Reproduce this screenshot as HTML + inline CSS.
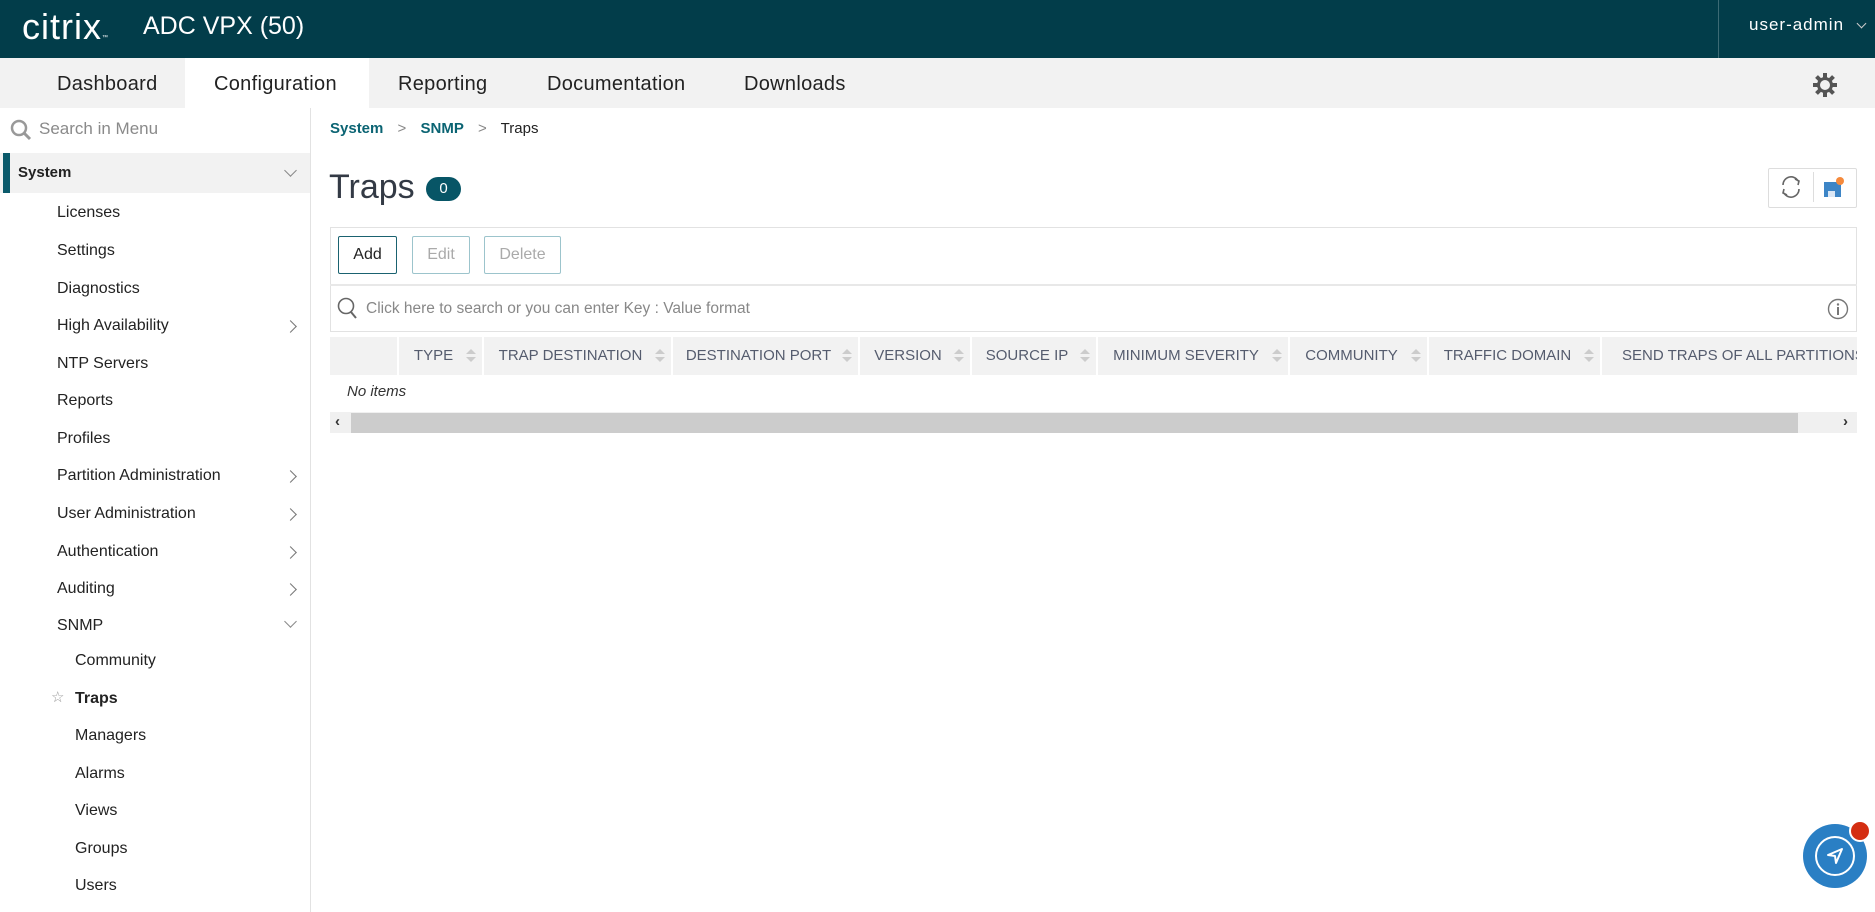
<!DOCTYPE html>
<html><head><meta charset="utf-8"><style>
*{box-sizing:border-box;margin:0;padding:0}
body{width:1875px;height:912px;overflow:hidden;background:#fff;font-family:"Liberation Sans",sans-serif;position:relative;color:#222}
.a{position:absolute}
#hdr{left:0;top:0;width:1875px;height:58px;background:#023d4a}
#nav{left:0;top:58px;width:1875px;height:50px;background:#f2f2f2}
.tab{top:59px;height:50px;line-height:50px;font-size:20px;color:#222;letter-spacing:.3px}
#side{left:0;top:108px;width:311px;height:804px;border-right:1px solid #e2e2e2}
.mi{left:57px;font-size:16px;color:#222}
.si{left:75px;font-size:16px;color:#222}
.chev{left:286px;width:9px;height:9px;border-right:1.5px solid #777;border-top:1.5px solid #777;transform:rotate(45deg)}
.chd{width:9px;height:9px;border-right:1.5px solid #888;border-bottom:1.5px solid #888;transform:rotate(45deg)}
.th{top:337px;height:38px;background:#f2f2f2;font-size:15px;color:#555c6e;line-height:38px;text-align:center;position:absolute}
.th i{position:absolute;right:6px;top:12px;width:0;height:0;border-left:5px solid transparent;border-right:5px solid transparent;border-bottom:5px solid #ccc}
.th i:after{content:"";position:absolute;left:-5px;top:8px;border-left:5px solid transparent;border-right:5px solid transparent;border-top:5px solid #ccc}
.btn{height:38px;top:236px;border:1px solid #9cc4cc;border-radius:2px;font-size:16px;line-height:36px;text-align:center;color:#aaa}
</style></head><body>
<div class="a" id="hdr"></div>
<div class="a" style="left:22px;top:6px;font-size:36px;color:#fff;font-weight:300;letter-spacing:1px">citrix<span style="font-size:6px">™</span></div>
<div class="a" style="left:143px;top:12px;font-size:25px;color:#fff">ADC VPX (50)</div>
<div class="a" style="left:1718px;top:0;width:1px;height:58px;background:#3c6a74"></div>
<div class="a" style="left:1749px;top:15px;font-size:17px;color:#fff;letter-spacing:1px">user-admin</div>
<div class="a chd" style="left:1858px;top:20px;border-color:#ccc;width:7px;height:7px"></div>
<div class="a" id="nav"></div>
<div class="a" style="left:185px;top:58px;width:184px;height:50px;background:#fff"></div>
<div class="a tab" style="left:57px">Dashboard</div>
<div class="a tab" style="left:214px">Configuration</div>
<div class="a tab" style="left:398px">Reporting</div>
<div class="a tab" style="left:547px">Documentation</div>
<div class="a tab" style="left:744px">Downloads</div>
<svg class="a" style="left:1812px;top:72px" width="26" height="26" viewBox="0 0 26 26"><g fill="#555"><circle cx="13" cy="13" r="8"/><rect x="11" y="1" width="4" height="24"/><rect x="1" y="11" width="24" height="4"/><rect x="11" y="1" width="4" height="24" transform="rotate(45 13 13)"/><rect x="11" y="1" width="4" height="24" transform="rotate(-45 13 13)"/></g><circle cx="13" cy="13" r="5" fill="#f2f2f2"/></svg>

<div class="a" id="side"></div>
<svg class="a" style="left:10px;top:119px" width="22" height="22" viewBox="0 0 22 22"><circle cx="9" cy="9" r="7" fill="none" stroke="#999" stroke-width="2.5"/><line x1="14" y1="14" x2="20" y2="20" stroke="#999" stroke-width="3"/></svg>
<div class="a" style="left:39px;top:119px;font-size:17px;color:#8a8a8a">Search in Menu</div>
<div class="a" style="left:0;top:153px;width:310px;height:40px;background:#f2f2f2"></div>
<div class="a" style="left:3px;top:153px;width:7px;height:40px;background:#0b5a6b"></div>
<div class="a" style="left:18px;top:164px;font-size:15px;font-weight:bold">System</div>
<div class="a chd" style="left:286px;top:166px"></div>
<div class="a mi" style="top:204px">Licenses</div>
<div class="a mi" style="top:242px">Settings</div>
<div class="a mi" style="top:280px">Diagnostics</div>
<div class="a mi" style="top:317px">High Availability</div><div class="a chev" style="top:322px"></div>
<div class="a mi" style="top:355px">NTP Servers</div>
<div class="a mi" style="top:392px">Reports</div>
<div class="a mi" style="top:430px">Profiles</div>
<div class="a mi" style="top:467px">Partition Administration</div><div class="a chev" style="top:472px"></div>
<div class="a mi" style="top:505px">User Administration</div><div class="a chev" style="top:510px"></div>
<div class="a mi" style="top:543px">Authentication</div><div class="a chev" style="top:548px"></div>
<div class="a mi" style="top:580px">Auditing</div><div class="a chev" style="top:585px"></div>
<div class="a mi" style="top:617px">SNMP</div><div class="a chd" style="left:286px;top:617px"></div>
<div class="a si" style="top:652px">Community</div>
<div class="a" style="left:51px;top:688px;font-size:15px;color:#999">☆</div>
<div class="a si" style="top:690px;font-weight:bold">Traps</div>
<div class="a si" style="top:727px">Managers</div>
<div class="a si" style="top:765px">Alarms</div>
<div class="a si" style="top:802px">Views</div>
<div class="a si" style="top:840px">Groups</div>
<div class="a si" style="top:877px">Users</div>

<div class="a" style="left:330px;top:120px;font-size:15px"><b style="color:#0b6473">System</b> <span style="color:#888;margin:0 10px">&gt;</span> <b style="color:#0b6473">SNMP</b> <span style="color:#888;margin:0 10px">&gt;</span> Traps</div>
<div class="a" style="left:329px;top:168px;font-size:34px;color:#333a45">Traps</div>
<div class="a" style="left:426px;top:177px;width:35px;height:24px;border-radius:12px;background:#075566;color:#fff;font-size:15px;text-align:center;line-height:24px">0</div>
<div class="a" style="left:1768px;top:168px;width:89px;height:40px;border:1px solid #ddd;border-radius:2px"></div>
<div class="a" style="left:1813px;top:172px;width:1px;height:30px;background:#ddd"></div>
<svg class="a" style="left:1778px;top:174px" width="26" height="26" viewBox="0 0 26 26"><path d="M5 11a8 8 0 0 1 15-4M21 15a8 8 0 0 1-15 4" fill="none" stroke="#666" stroke-width="1.6"/><path d="M17 5l4 2-1 4M9 21l-4-2 1-4" fill="none" stroke="#666" stroke-width="1.6"/></svg>
<svg class="a" style="left:1822px;top:176px" width="24" height="24" viewBox="0 0 24 24"><path d="M2 6h14l3 3v12H2z" fill="#3d85c6"/><rect x="6" y="15" width="7" height="6" fill="#dbe7f5"/><circle cx="18" cy="5" r="4" fill="#f58a3c"/></svg>

<div class="a" style="left:330px;top:227px;width:1527px;height:105px;border:1px solid #e2e2e2"></div>
<div class="a" style="left:330px;top:284px;width:1527px;height:2px;background:#e8e8e8"></div>
<div class="a btn" style="left:338px;width:59px;border-color:#1a6270;color:#222">Add</div>
<div class="a btn" style="left:412px;width:58px">Edit</div>
<div class="a btn" style="left:484px;width:77px">Delete</div>
<svg class="a" style="left:337px;top:297px" width="22" height="24" viewBox="0 0 22 24"><circle cx="9" cy="9" r="7.5" fill="none" stroke="#666" stroke-width="1.6"/><line x1="14" y1="15" x2="19" y2="21" stroke="#666" stroke-width="2"/></svg>
<div class="a" style="left:366px;top:300px;font-size:15.5px;color:#888">Click here to search or you can enter Key : Value format</div>
<svg class="a" style="left:1827px;top:298px" width="22" height="22" viewBox="0 0 22 22"><circle cx="11" cy="11" r="9.5" fill="none" stroke="#777" stroke-width="1.4"/><circle cx="11" cy="6.5" r="1.2" fill="#777"/><rect x="10" y="9" width="2" height="8" fill="#777"/></svg>

<div class="th" style="left:330px;width:67px"></div>
<div class="th" style="left:399px;width:83px;padding-right:14px">TYPE<i></i></div>
<div class="th" style="left:484px;width:187px;padding-right:14px">TRAP DESTINATION<i></i></div>
<div class="th" style="left:673px;width:185px;padding-right:14px">DESTINATION PORT<i></i></div>
<div class="th" style="left:860px;width:110px;padding-right:14px">VERSION<i></i></div>
<div class="th" style="left:972px;width:124px;padding-right:14px">SOURCE IP<i></i></div>
<div class="th" style="left:1098px;width:190px;padding-right:14px">MINIMUM SEVERITY<i></i></div>
<div class="th" style="left:1290px;width:137px;padding-right:14px">COMMUNITY<i></i></div>
<div class="th" style="left:1429px;width:171px;padding-right:14px">TRAFFIC DOMAIN<i></i></div>
<div class="th" style="left:1602px;width:255px;text-align:left;padding-left:20px;overflow:hidden;white-space:nowrap">SEND TRAPS OF ALL PARTITIONS</div>
<div class="a" style="left:347px;top:383px;font-size:15px;font-style:italic;color:#333">No items</div>
<div class="a" style="left:330px;top:412px;width:1527px;height:21px;background:#f0f0f0"></div>
<div class="a" style="left:351px;top:413px;width:1447px;height:20px;background:#cccccc"></div>
<div class="a" style="left:335px;top:413px;font-size:15px;color:#333;font-weight:bold">‹</div>
<div class="a" style="left:1843px;top:413px;font-size:15px;color:#333;font-weight:bold">›</div>

<div class="a" style="left:1803px;top:824px;width:64px;height:64px;border-radius:50%;background:#2a7fc4"></div>
<div class="a" style="left:1815px;top:836px;width:40px;height:40px;border-radius:50%;border:2px solid #fff"></div>
<svg class="a" style="left:1823px;top:844px" width="24" height="24" viewBox="0 0 24 24"><path d="M19 5L5 11l7 1 1 7z" fill="none" stroke="#fff" stroke-width="2" stroke-linejoin="round"/></svg>
<div class="a" style="left:1849px;top:820px;width:22px;height:22px;border-radius:50%;background:#d42e12;border:2px solid #fff"></div>
</body></html>
